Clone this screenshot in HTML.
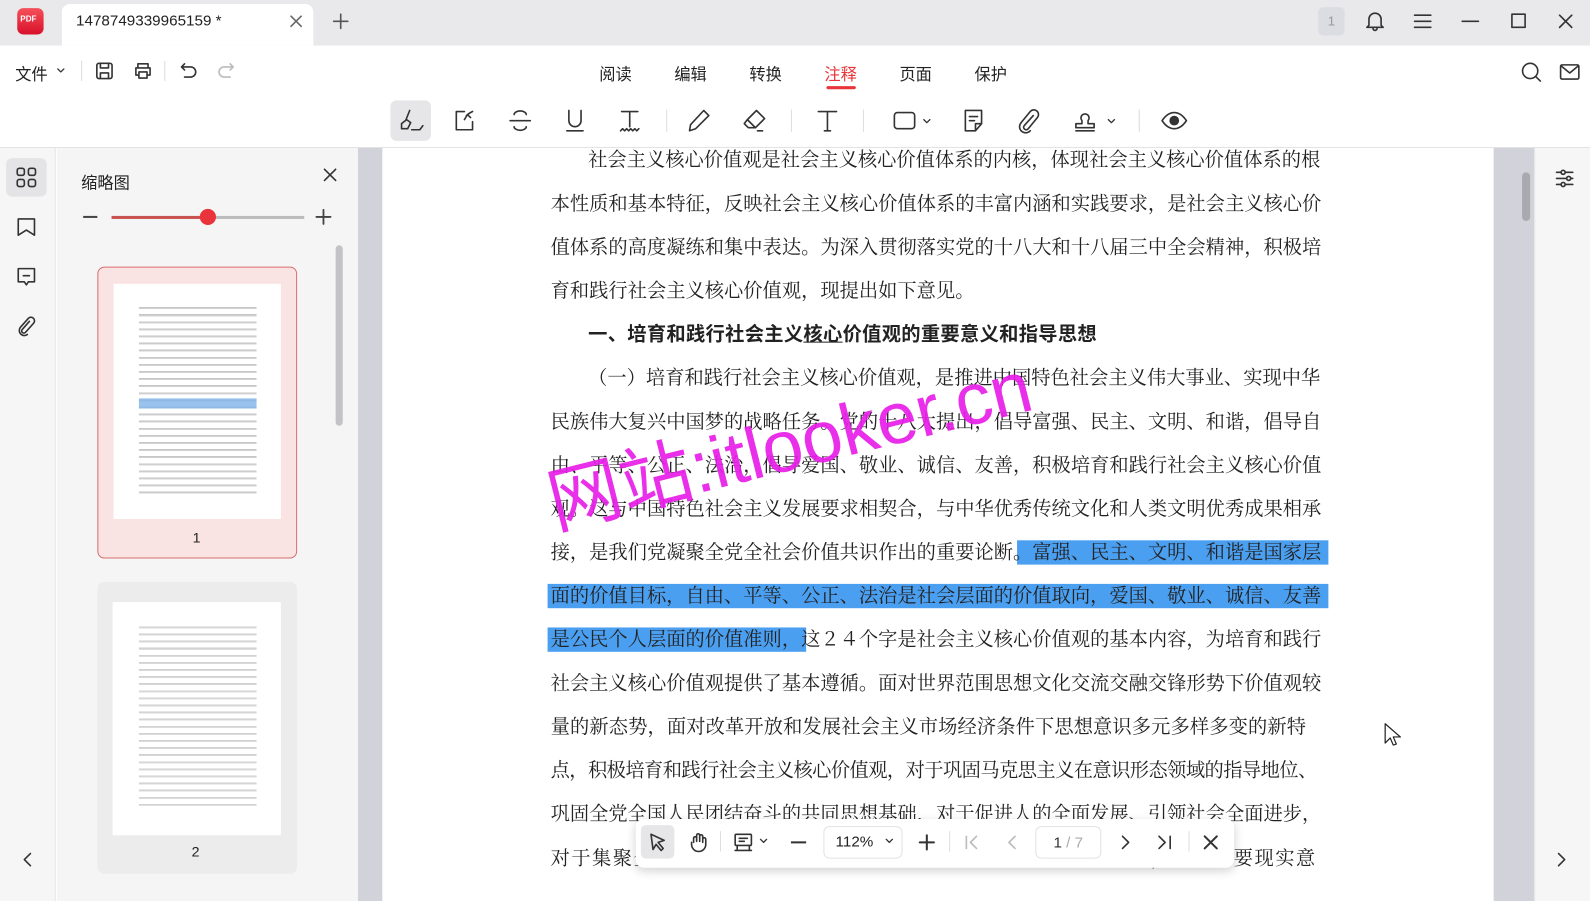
<!DOCTYPE html>
<html><head><meta charset="utf-8"><style>
*{margin:0;padding:0;box-sizing:border-box}
body{width:1590px;height:889px;overflow:hidden;position:relative;background:#fff;font-family:"Liberation Sans","Noto Sans CJK SC",sans-serif;color:#222}
#w{position:absolute;left:0;top:0;width:1568px;height:877px;transform:scale(1.01403,1.01368);transform-origin:0 0}
.abs{position:absolute}
svg{fill:none;stroke:#333;stroke-width:1.6;stroke-linecap:round;stroke-linejoin:round}
.ti{position:absolute;top:99px;width:40px;height:40px;display:flex;align-items:center;justify-content:center}
.menu{position:absolute;top:60px;font-size:16px;color:#222}
.line{position:absolute;left:543px;width:754px;font-family:"Liberation Serif","Noto Serif CJK SC",serif;font-size:19px;line-height:26px;height:26px;color:#222;text-align:justify;text-align-last:justify;white-space:nowrap}
.nl{text-align-last:left}
.hl{background:#4b9ff0}
.thumbtxt{background:repeating-linear-gradient(#fff 0,#fff 3px,#9a9a9a 3px,#bdbdbd 5px,#fff 5px,#fff 7px)}
</style></head><body><div id="w">
<div class="abs" style="left:0;top:0;width:1568px;height:45px;background:#e9e9ec"></div>
<div class="abs" style="left:17px;top:8px;width:26px;height:26px;border-radius:6px;background:linear-gradient(#f5505a,#d8102a);color:#fff;font-size:8px;font-weight:bold;padding:6px 0 0 3px">PDF</div>
<div class="abs" style="left:61px;top:4px;width:248px;height:41px;background:#fff;border-radius:8px 8px 0 0"></div>
<div class="abs" style="left:75px;top:12px;font-size:15px;color:#222">1478749339965159 *</div>
<svg class="abs" style="left:285px;top:14px" width="14" height="14"><path d="M2 2L12 12M12 2L2 12" stroke="#666"/></svg>
<svg class="abs" style="left:327px;top:12px" width="18" height="18"><path d="M9 2V16M2 9H16" stroke="#555"/></svg>
<div class="abs" style="left:1300px;top:7px;width:26px;height:28px;background:#dcdde3;border-radius:5px;font-size:13px;color:#999;text-align:center;line-height:28px">1</div>
<svg class="abs" style="left:1345px;top:10px" width="22" height="22"><path d="M5 15V9a6 6 0 0 1 12 0v6l2 2H3z M9 18a2 2 0 0 0 4 0"/></svg>
<svg class="abs" style="left:1393px;top:11px" width="20" height="20"><path d="M2 4H18M2 10H18M2 16H18"/></svg>
<svg class="abs" style="left:1440px;top:11px" width="20" height="20"><path d="M2 10H18"/></svg>
<svg class="abs" style="left:1488px;top:11px" width="20" height="20"><rect x="3" y="3" width="13" height="13"/></svg>
<svg class="abs" style="left:1535px;top:12px" width="18" height="18"><path d="M3 3L15 15M15 3L3 15"/></svg>
<div class="abs" style="left:15px;top:60px;font-size:16px">文件</div>
<svg class="abs" style="left:55px;top:66px" width="10" height="8"><path d="M2 2L5 5L8 2" stroke-width="1.3"/></svg>
<div class="abs" style="left:80px;top:60px;width:1px;height:20px;background:#ddd"></div>
<svg class="abs" style="left:93px;top:60px" width="20" height="20"><rect x="2.5" y="2.5" width="15" height="15" rx="2"/><path d="M6 3v4h8V3M6 17v-5h8v5"/></svg>
<svg class="abs" style="left:131px;top:60px" width="20" height="20"><path d="M5 7V3h10v4M3 7h14v7h-2M5 14H3V7M6 11h8v6H6z"/></svg>
<div class="abs" style="left:162px;top:60px;width:1px;height:20px;background:#ddd"></div>
<svg class="abs" style="left:175px;top:60px" width="22" height="20"><path d="M4 6h9a5 5 0 0 1 0 10H7M4 6l3-3M4 6l3 3"/></svg>
<svg class="abs" style="left:212px;top:60px" width="22" height="20"><path d="M18 6H9a5 5 0 0 0 0 10h6M18 6l-3-3M18 6l-3 3" stroke="#bbb"/></svg>
<div class="menu" style="left:591px">阅读</div>
<div class="menu" style="left:665px">编辑</div>
<div class="menu" style="left:739px">转换</div>
<div class="menu" style="left:813px;color:#e8343a">注释</div>
<div class="abs" style="left:815px;top:85px;width:29px;height:3px;background:#e8343a;border-radius:2px"></div>
<div class="menu" style="left:887px">页面</div>
<div class="menu" style="left:961px">保护</div>
<svg class="abs" style="left:1499px;top:60px" width="22" height="22"><circle cx="10" cy="10" r="7.5"/><path d="M15.5 15.5L20 20"/></svg>
<svg class="abs" style="left:1537px;top:60px" width="22" height="22"><rect x="2" y="4" width="18" height="14" rx="1.5"/><path d="M2.5 5l8.5 7 8.5-7"/></svg>
<div class="abs" style="left:385px;top:99px;width:40px;height:40px;background:#e6e6e8;border-radius:6px"></div>
<div class="ti" style="left:385px"><svg width="26" height="26"><path d="M12 3L8 13M4 16l5-4 4 3-3 6H4zM14 22h8l3-4"/></svg></div>
<div class="ti" style="left:439px"><svg width="26" height="26"><path d="M12 4H4v18h16v-8M12 12l3-5 3 3M14 8c2-2 4-3 6-4"/></svg></div>
<div class="ti" style="left:493px"><svg width="26" height="26"><path d="M19 7a6 3.5 0 0 0-12 0M7 19a6 3.5 0 0 0 12 0M3 13h20"/></svg></div>
<div class="ti" style="left:547px"><svg width="26" height="26"><path d="M7 3v10a6 6 0 0 0 12 0V3M5 23h16"/></svg></div>
<div class="ti" style="left:601px"><svg width="26" height="26"><path d="M5 4h16M13 4v15M4 23l2-2 2 2 2-2 2 2 2-2 2 2 2-2 2 2 2-2"/></svg></div>
<div class="abs" style="left:657px;top:108px;width:1px;height:22px;background:#ddd"></div>
<div class="ti" style="left:670px"><svg width="26" height="26"><path d="M17 3l5 5L9 21l-6 2 1-6z"/></svg></div>
<div class="ti" style="left:724px"><svg width="26" height="26"><path d="M15 3l8 8-9 9-8-8zM6 12l-3 4 4 4h7M16 23h5"/></svg></div>
<div class="abs" style="left:780px;top:108px;width:1px;height:22px;background:#ddd"></div>
<div class="ti" style="left:796px"><svg width="26" height="26"><path d="M4 4h18M13 4v19M10 23h6"/></svg></div>
<div class="abs" style="left:851px;top:108px;width:1px;height:22px;background:#ddd"></div>
<div class="ti" style="left:872px"><svg width="26" height="26"><rect x="3" y="5" width="20" height="16" rx="3"/></svg></div>
<svg class="abs" style="left:909px;top:116px" width="10" height="8"><path d="M2 2L5 5L8 2" stroke-width="1.3"/></svg>
<div class="ti" style="left:940px"><svg width="26" height="26"><path d="M5 3h16v13l-6 7H5zM21 16h-6v7M9 9h8M9 13h5"/></svg></div>
<div class="ti" style="left:994px"><svg width="26" height="26"><path d="M18 8L9 18a2.5 2.5 0 0 0 4 3l9-11a4.5 4.5 0 0 0-7-6L6 15a6 6 0 0 0 9 8"/></svg></div>
<div class="ti" style="left:1050px"><svg width="26" height="26"><path d="M10 13a4 4 0 1 1 6 0v3h6v4H4v-4h6zM4 23h18"/></svg></div>
<svg class="abs" style="left:1091px;top:116px" width="10" height="8"><path d="M2 2L5 5L8 2" stroke-width="1.3"/></svg>
<div class="abs" style="left:1123px;top:108px;width:1px;height:22px;background:#ddd"></div>
<div class="ti" style="left:1138px"><svg width="28" height="26"><path d="M2 13c4-6 8-8 12-8s8 2 12 8c-4 6-8 8-12 8S6 19 2 13z"/><circle cx="14" cy="13" r="4" fill="#333"/></svg></div>
<div class="abs" style="left:0;top:145px;width:1568px;height:1px;background:#e3e3e3"></div>
<div class="abs" style="left:0;top:146px;width:55px;height:743px;background:#f6f6f7;border-right:1px solid #e6e6e6"></div>
<div class="abs" style="left:6px;top:156px;width:40px;height:38px;background:#e4e4e6;border-radius:6px"></div>
<svg class="abs" style="left:15px;top:164px" width="22" height="22"><rect x="2" y="2" width="7" height="7" rx="2"/><rect x="13" y="2" width="7" height="7" rx="2"/><rect x="2" y="13" width="7" height="7" rx="2"/><rect x="13" y="13" width="7" height="7" rx="2"/></svg>
<svg class="abs" style="left:15px;top:213px" width="22" height="22"><path d="M3 3h16v16l-8-5-8 5z"/></svg>
<svg class="abs" style="left:15px;top:262px" width="22" height="22"><path d="M3 3h16v13h-6l-2 3-2-3H3zM8 10h6"/></svg>
<svg class="abs" style="left:15px;top:311px" width="22" height="22"><path d="M14 6l-7 8a2 2 0 0 0 3 3l8-9a3.5 3.5 0 0 0-5-5l-8 9a5 5 0 0 0 7 7"/></svg>
<svg class="abs" style="left:20px;top:839px" width="14" height="18"><path d="M10 3L4 9l6 6"/></svg>
<div class="abs" style="left:56px;top:146px;width:297px;height:743px;background:#f5f5f6"></div>
<div class="abs" style="left:80px;top:167px;font-size:16px">缩略图</div>
<svg class="abs" style="left:318px;top:165px" width="16" height="16"><path d="M2 2L13 13M13 2L2 13"/></svg>
<div class="abs" style="left:82px;top:213px;width:14px;height:2px;background:#444"></div>
<div class="abs" style="left:110px;top:213px;width:95px;height:3px;background:#c85250"></div>
<div class="abs" style="left:205px;top:213px;width:95px;height:3px;background:#bbb"></div>
<div class="abs" style="left:197px;top:206px;width:16px;height:16px;border-radius:50%;background:#e8343a"></div>
<svg class="abs" style="left:311px;top:206px" width="16" height="16"><path d="M8 1V15M1 8H15" stroke="#444" stroke-width="1.8"/></svg>
<div class="abs" style="left:331px;top:242px;width:7px;height:178px;background:#c3c3c6;border-radius:4px"></div>
<div class="abs" style="left:96px;top:263px;width:197px;height:288px;background:#fae3e3;border:1.5px solid #d96e6e;border-radius:7px"></div>
<div class="abs" style="left:112px;top:280px;width:165px;height:232px;background:#fff"></div>
<div class="abs thumbtxt" style="left:137px;top:300px;width:116px;height:190px;opacity:.6"></div>
<div class="abs" style="left:137px;top:393px;width:116px;height:10px;background:#7fb4ea;opacity:.8"></div>
<div class="abs" style="left:190px;top:522px;font-size:14px">1</div>
<div class="abs" style="left:96px;top:574px;width:197px;height:288px;background:#ececed;border-radius:7px"></div>
<div class="abs" style="left:111px;top:594px;width:166px;height:230px;background:#fff"></div>
<div class="abs thumbtxt" style="left:137px;top:615px;width:116px;height:180px;opacity:.5"></div>
<div class="abs" style="left:189px;top:832px;font-size:14px">2</div>
<div class="abs" style="left:353px;top:146px;width:24px;height:743px;background:#d2d3da"></div>
<div class="abs" style="left:1473px;top:146px;width:40px;height:743px;background:#d2d3da"></div>
<div class="abs" style="left:1501px;top:170px;width:8px;height:48px;background:#a9aab0;border-radius:4px"></div>
<div class="abs" style="left:1513px;top:146px;width:77px;height:743px;background:#f6f6f7;border-left:1px solid #e5e5e5"></div>
<svg class="abs" style="left:1532px;top:165px" width="22" height="22"><path d="M3 5h4M12 5h7M3 11h10M17 11h2M3 17h4M12 17h7"/><circle cx="9.5" cy="5" r="2"/><circle cx="15" cy="11" r="2"/><circle cx="9.5" cy="17" r="2"/></svg>
<svg class="abs" style="left:1533px;top:839px" width="14" height="18"><path d="M4 3l6 6-6 6"/></svg>
<div class="abs hl" style="left:1003px;top:533px;width:307px;height:24px"></div>
<div class="abs hl" style="left:540px;top:576px;width:770px;height:24px"></div>
<div class="abs hl" style="left:540px;top:619px;width:255px;height:24px"></div>
<div class="line" style="top:146px;left:580px;width:718px">社会主义核心价值观是社会主义核心价值体系的内核，体现社会主义核心价值体系的根</div>
<div class="line" style="top:189px">本性质和基本特征，反映社会主义核心价值体系的丰富内涵和实践要求，是社会主义核心价</div>
<div class="line" style="top:232px">值体系的高度凝练和集中表达。为深入贯彻落实党的十八大和十八届三中全会精神，积极培</div>
<div class="line nl" style="top:275px">育和践行社会主义核心价值观，现提出如下意见。</div>
<div class="line nl" style="top:318px;left:580px;font-weight:bold;font-family:'Liberation Sans','Noto Sans CJK SC',sans-serif;font-size:19px;letter-spacing:.3px">一、培育和践行社会主义<u>核心</u>价值观的重要意义和指导思想</div>
<div class="line" style="top:361px;left:580px;width:718px">（一）培育和践行社会主义核心价值观，是推进中国特色社会主义伟大事业、实现中华</div>
<div class="line" style="top:404px">民族伟大复兴中国梦的战略任务。党的十八大提出，倡导富强、民主、文明、和谐，倡导自</div>
<div class="line" style="top:447px">由、平等、公正、法治，倡导爱国、敬业、诚信、友善，积极培育和践行社会主义核心价值</div>
<div class="line" style="top:490px">观。这与中国特色社会主义发展要求相契合，与中华优秀传统文化和人类文明优秀成果相承</div>
<div class="line" style="top:533px">接，是我们党凝聚全党全社会价值共识作出的重要论断。富强、民主、文明、和谐是国家层</div>
<div class="line" style="top:576px">面的价值目标，自由、平等、公正、法治是社会层面的价值取向，爱国、敬业、诚信、友善</div>
<div class="line" style="top:619px">是公民个人层面的价值准则，这２４个字是社会主义核心价值观的基本内容，为培育和践行</div>
<div class="line" style="top:662px">社会主义核心价值观提供了基本遵循。面对世界范围思想文化交流交融交锋形势下价值观较</div>
<div class="line" style="top:705px;width:745px">量的新态势，面对改革开放和发展社会主义市场经济条件下思想意识多元多样多变的新特</div>
<div class="line" style="top:748px;letter-spacing:-2px">点，积极培育和践行社会主义核心价值观，对于巩固马克思主义在意识形态领域的指导地位、</div>
<div class="line" style="top:791px;width:745px">巩固全党全国人民团结奋斗的共同思想基础，对于促进人的全面发展、引领社会全面进步，</div>
<div class="line" style="top:835px">对于集聚全面建成小康社会、实现中华民族伟大复兴的强大正能量，具有重要现实意</div>
<div class="abs" style="left:553px;top:437px;font-size:72px;color:#e81ee8;transform:rotate(-14deg);transform-origin:left bottom;white-space:nowrap;font-family:'Liberation Sans','Noto Sans CJK SC',sans-serif;opacity:.92">网站:itlooker.cn</div>
<svg class="abs" style="left:1364px;top:712px" width="18" height="26"><path d="M2 2v19l5-5 3 7 3-1-3-7h7z" fill="#fff" stroke="#222" stroke-width="1.2"/></svg>
<div class="abs" style="left:627px;top:808px;width:590px;height:48px;background:#fff;border-radius:8px;box-shadow:0 3px 10px rgba(0,0,0,.18)"></div>
<div class="abs" style="left:632px;top:814px;width:33px;height:33px;background:#e6e6e8;border-radius:5px"></div>
<svg class="abs" style="left:638px;top:820px" width="22" height="22"><path d="M4 3l13 6-6 2 5 6-2 2-5-6-3 5z"/></svg>
<svg class="abs" style="left:678px;top:819px" width="22" height="22"><path d="M6 12V8a1.5 1.5 0 0 1 3 0v3V5a1.5 1.5 0 0 1 3 0v6V6a1.5 1.5 0 0 1 3 0v6V9a1.5 1.5 0 0 1 3 0v5a7 7 0 0 1-14 0v-2"/></svg>
<div class="abs" style="left:710px;top:820px;width:1px;height:20px;background:#ddd"></div>
<svg class="abs" style="left:722px;top:820px" width="22" height="22"><rect x="3" y="3" width="16" height="11" rx="1"/><path d="M7 7h8M7 10h5M5 14v5M17 14v5M3 19h16"/></svg>
<svg class="abs" style="left:748px;top:826px" width="10" height="8"><path d="M2 2L5 5L8 2" stroke-width="1.3"/></svg>
<div class="abs" style="left:780px;top:830px;width:15px;height:2px;background:#333"></div>
<div class="abs" style="left:812px;top:815px;width:78px;height:32px;border:1px solid #e2e2e2;border-radius:6px;font-size:15px;line-height:30px;padding-left:11px">112%</div>
<svg class="abs" style="left:872px;top:826px" width="10" height="8"><path d="M2 2L5 5L8 2" stroke-width="1.3"/></svg>
<svg class="abs" style="left:905px;top:822px" width="18" height="18"><path d="M9 2V16M2 9H16" stroke-width="2"/></svg>
<div class="abs" style="left:936px;top:820px;width:1px;height:20px;background:#ddd"></div>
<svg class="abs" style="left:950px;top:822px" width="18" height="18"><path d="M3 3v12M13 3l-6 6 6 6" stroke="#bbb"/></svg>
<svg class="abs" style="left:990px;top:822px" width="18" height="18"><path d="M11 3l-6 6 6 6" stroke="#bbb"/></svg>
<div class="abs" style="left:1021px;top:815px;width:65px;height:32px;border:1px solid #e2e2e2;border-radius:6px;font-size:15px;line-height:32px;text-align:center;color:#333">1 <span style="color:#aaa">/ 7</span></div>
<svg class="abs" style="left:1101px;top:822px" width="18" height="18"><path d="M6 3l6 6-6 6"/></svg>
<svg class="abs" style="left:1139px;top:822px" width="18" height="18"><path d="M4 3l6 6-6 6M15 3v12"/></svg>
<div class="abs" style="left:1172px;top:820px;width:1px;height:20px;background:#ddd"></div>
<svg class="abs" style="left:1186px;top:823px" width="16" height="16"><path d="M2 2L14 14M14 2L2 14" stroke-width="2"/></svg>
</div></body></html>
